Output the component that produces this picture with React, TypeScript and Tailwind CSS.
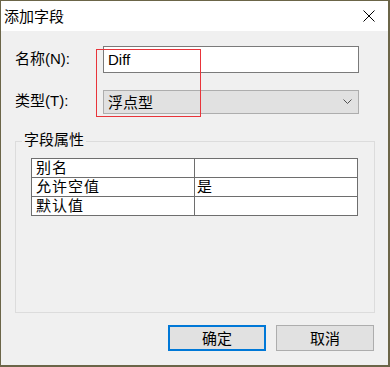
const font = { fontFamily: '"Liberation Sans", "Noto Sans CJK SC", sans-serif' };

const rows = [
  { name: '别名', value: '' },
  { name: '允许空值', value: '是' },
  { name: '默认值', value: '' },
];

const App = () => {
  return (
    <div className="w-[390px] h-[367px] bg-[#6b6548] pt-px pl-px" style={font}>
      <div className="relative w-[387px] h-[364px] bg-[#f0f0f0] flex flex-col text-black">
        {/* title bar */}
        <div className="h-[30px] bg-white flex items-center justify-between pl-[3px] pr-[13px]">
          <span className="text-[15px] leading-none">添加字段</span>
          <svg width="12" height="12" viewBox="0 0 12 12" className="block">
            <path d="M0.5 0.5 L11.5 11.5 M11.5 0.5 L0.5 11.5" stroke="#000" strokeWidth="1" fill="none" />
          </svg>
        </div>

        {/* name */}
        <div className="flex mt-[15px] pl-[14px]">
          <span className="w-[88px] text-[15px] leading-[17px] pt-[4px]">名称(N):</span>
          <div className="w-[256px] h-[27px] border border-[#7a7a7a] bg-white pl-[4px] pt-[4px] text-[15px] leading-[17px]">
            Diff
          </div>
        </div>

        {/* type */}
        <div className="flex mt-[17px] pl-[14px]">
          <span className="w-[88px] text-[15px] leading-[17px] pt-[2px]">类型(T):</span>
          <div className="w-[256px] h-[24px] border border-[#adadad] bg-[#e1e1e1] flex items-center justify-between pl-[4px] pr-[6px]">
            <span className="text-[15px] leading-[17px]">浮点型</span>
            <svg width="9" height="6" viewBox="0 0 9 6" className="block">
              <path d="M0.5 0.5 L4.5 4.5 L8.5 0.5" stroke="#505050" strokeWidth="1" fill="none" />
            </svg>
          </div>
        </div>

        {/* group box */}
        <div className="mt-[27px] ml-[14px] w-[360px] h-[172px] border border-[#dcdcdc] flex flex-col">
          <span className="self-start -mt-[11px] ml-[6px] px-[2px] bg-[#f0f0f0] text-[15px] leading-[17px]">
            字段属性
          </span>
          <div className="ml-[15px] mt-[10px] w-[327px] border-t border-l border-[#6e6e6e]">
            {rows.map((row) => (
              <div key={row.name} className="flex h-[19px]">
                <div className="w-[163px] border-r border-b border-[#6e6e6e] bg-white pl-[4px] text-[15px] leading-[18px] tracking-[1px]">
                  {row.name}
                </div>
                <div className="w-[163px] border-r border-b border-[#6e6e6e] bg-white pl-[2px] text-[15px] leading-[18px] tracking-[1px]">
                  {row.value}
                </div>
              </div>
            ))}
          </div>
        </div>

        {/* buttons */}
        <div className="flex justify-end gap-[10px] mt-[12px] pr-[14px]">
          <button className="w-[98px] h-[26px] border-2 border-[#0078d7] bg-[#e1e1e1] text-[15px] leading-none">
            确定
          </button>
          <button className="w-[98px] h-[26px] border border-[#adadad] bg-[#e1e1e1] text-[15px] leading-none">
            取消
          </button>
        </div>

        {/* red highlight overlay */}
        <div className="absolute left-[95px] top-[48px] w-[105px] h-[68px] border border-[#e8343a] pointer-events-none" />
      </div>
    </div>
  );
};

export default App;
